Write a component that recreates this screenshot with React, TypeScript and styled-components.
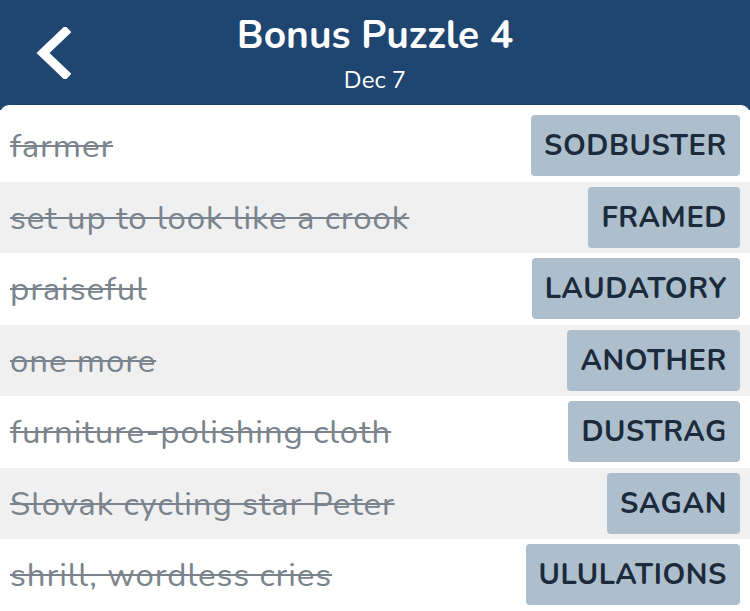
import styled, { createGlobalStyle } from "styled-components"

const GlobalStyle = createGlobalStyle`
  html, body {
    margin: 0;
    padding: 0;
    background: #1f4571;
    font-family: "Nunito", Lato, "Open Sans", sans-serif;
  }
`

const Page = styled.div`
  width: 750px;
  height: 611px;
  overflow: hidden;
  background: #1f4571;
  display: flex;
  flex-direction: column;
`

const Header = styled.header`
  height: 105px;
  display: grid;
  grid-template-columns: 100px 1fr 100px;
  align-items: center;
  color: #fff;
`

const BackButton = styled.button`
  background: none;
  border: none;
  padding: 0 0 0 33px;
  display: flex;
  align-items: center;
  cursor: pointer;
`

const Titles = styled.div`
  display: flex;
  flex-direction: column;
  align-items: center;
  padding-top: 2px;
`

const Title = styled.h1`
  margin: 0;
  font-size: 39px;
  font-weight: 700;
  line-height: 46px;
`

const Subtitle = styled.div`
  font-size: 24px;
  line-height: 30px;
  margin-top: 6px;
`

const List = styled.ul`
  flex: 1;
  margin: 0;
  padding: 5px 0 0;
  list-style: none;
  background: #fff;
  border-radius: 9px 9px 0 0;
`

const Row = styled.li<{ $shaded: boolean }>`
  height: 71.5px;
  box-sizing: border-box;
  display: flex;
  align-items: center;
  justify-content: space-between;
  padding: 0 10px 0 10px;
  background: ${({ $shaded }) => ($shaded ? "#f0f0f0" : "#fff")};
`

const Clue = styled.span`
  font-size: 33px;
  letter-spacing: 0.9px;
  color: #7b848d;
  text-decoration: line-through;
  text-decoration-thickness: 2px;
  white-space: nowrap;
  padding-top: 2px;
`

const Answer = styled.span`
  height: 61px;
  display: flex;
  align-items: center;
  padding: 0 13px;
  border-radius: 4px;
  background: #adbfcd;
  color: #1c2b3b;
  font-size: 29px;
  font-weight: 700;
  letter-spacing: 0.6px;
`

const entries = [
  ["farmer", "SODBUSTER"],
  ["set up to look like a crook", "FRAMED"],
  ["praiseful", "LAUDATORY"],
  ["one more", "ANOTHER"],
  ["furniture-polishing cloth", "DUSTRAG"],
  ["Slovak cycling star Peter", "SAGAN"],
  ["shrill, wordless cries", "ULULATIONS"],
]

export default function App() {
  return (
    <Page>
      <GlobalStyle />
      <Header>
        <BackButton aria-label="Back">
          <svg width="38" height="52" viewBox="0 0 38 52">
            <path d="M32 5 L10 26 L32 47" fill="none" stroke="#fff" strokeWidth="9" strokeLinecap="square" />
          </svg>
        </BackButton>
        <Titles>
          <Title>Bonus Puzzle 4</Title>
          <Subtitle>Dec 7</Subtitle>
        </Titles>
        <div />
      </Header>
      <List>
        {entries.map(([clue, answer], i) => (
          <Row key={answer} $shaded={i % 2 === 1}>
            <Clue>{clue}</Clue>
            <Answer>{answer}</Answer>
          </Row>
        ))}
      </List>
    </Page>
  )
}
